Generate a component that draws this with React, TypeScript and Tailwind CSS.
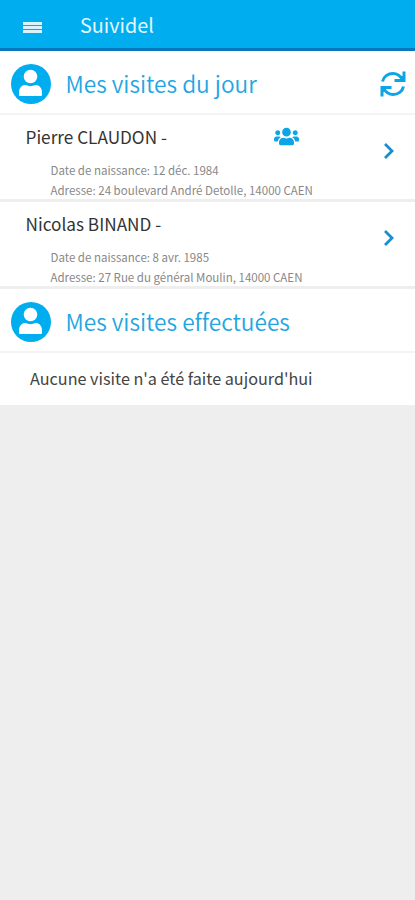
import type { ReactNode } from 'react';
import { FaUsers } from 'react-icons/fa';

const visites = [
    {
        nom: 'Pierre CLAUDON -',
        naissance: '12 déc. 1984',
        adresse: '24 boulevard André Detolle, 14000 CAEN',
        groupe: true,
    },
    {
        nom: 'Nicolas BINAND -',
        naissance: '8 avr. 1985',
        adresse: '27 Rue du général Moulin, 14000 CAEN',
        groupe: false,
    },
];

function UserIcon() {
    return (
        <svg viewBox="0 0 40 40" className="w-10 h-10 shrink-0">
            <circle cx="20" cy="20" r="20" fill="#00aeef" />
            <circle cx="19.500" cy="12.500" r="6.800" fill="#fff" />
            <path d="M8 31v-2.800c0-4.500 3-7.200 6.500-7.200 3 1.500 7 1.500 10 0 3.500 0 6.500 2.700 6.500 7.200V31q0 1-1 1H9q-1 0-1-1z" fill="#fff" />
        </svg>
    );
}

function RefreshIcon() {
    return (
        <svg viewBox="0 0 26 26" className="w-[26px] h-[26px]" fill="none" stroke="#0ea5e6" strokeWidth="3">
            <path d="M2.500 10.500C3.500 5.500 8 2.500 13 2.500c4 0 7 2 9.500 6" />
            <path d="M23.500 15.500C22.500 20.500 18 23.500 13 23.500c-4 0-7-2-9.500-6" />
            <path d="M24 .5V9.500h-9.500" />
            <path d="M2 25.500V16.500h9.500" />
            <path d="M23 5v4h-4zM3 21v-4h4z" fill="#0ea5e6" strokeWidth="1" />
        </svg>
    );
}

function SectionHeader({ title, children }: { title: string; children?: ReactNode }) {
    return (
        <div className="h-16 pt-1 pl-[10.500px] pr-[9px] flex items-center bg-white border-b-2 border-[#f4f4f4]">
            <UserIcon />
            <h2 className="ml-[15px] flex-1 text-[22.700px] leading-8 font-[350] text-[#22a5e3] whitespace-nowrap [font-variant-ligatures:none]">{title}</h2>
            {children}
        </div>
    );
}

export default function App() {
    return (
        <div className="min-h-screen bg-[#eeeeee] font-['Noto_Sans_CJK_SC',sans-serif] overflow-hidden">
            <header className="h-[51px] bg-[#00aeef] border-b-[3px] border-[#0878be] flex items-center">
                <div className="ml-[23px] w-[19px] flex flex-col gap-px pt-1.5">
                    <span className="h-[3px] bg-white/85" />
                    <span className="h-[3px] bg-white/85" />
                    <span className="h-[3px] bg-white/85" />
                </div>
                <h1 className="ml-[38px] pt-0.5 text-[19.800px] leading-7 text-[#e6f6fd]">Suividel</h1>
            </header>

            <SectionHeader title="Mes visites du jour">
                <RefreshIcon />
            </SectionHeader>

            {visites.map((visite) => (
                <div key={visite.nom} className="relative h-[87px] pl-[25.500px] pt-2 bg-white border-b-[3px] border-[#eeeeee]">
                    <p className="text-[17.200px] leading-7 text-[#333]">{visite.nom}</p>
                    <div className="pl-[25px] mt-[9px] text-[11.500px] leading-5 text-[#888] whitespace-nowrap">
                        <p>Date de naissance: {visite.naissance}</p>
                        <p>Adresse: {visite.adresse}</p>
                    </div>
                    {visite.groupe && <FaUsers className="absolute left-[274px] top-[9px] w-[25px] h-[25px] text-[#0ea5e6]" />}
                    <svg viewBox="0 0 10 16" className="absolute right-[21px] top-[28px] w-[10px] h-4" fill="none" stroke="#168fd2" strokeWidth="2.800">
                        <path d="M1 1l7 7-7 7" />
                    </svg>
                </div>
            ))}

            <SectionHeader title="Mes visites effectuées" />
            <p className="h-[52px] pl-[30px] bg-white text-[16.200px] leading-[50px] text-[#444]">
                Aucune visite n'a été faite aujourd'hui
            </p>
        </div>
    );
}
